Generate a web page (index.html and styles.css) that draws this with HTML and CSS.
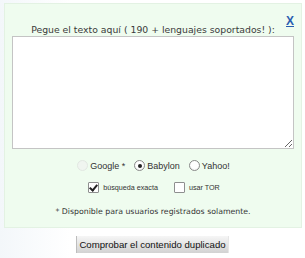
FILE: index.html
```html
<!DOCTYPE html>
<html>
<head>
<meta charset="utf-8">
<link rel="stylesheet" href="styles.css">
</head>
<body>
<div class="page">
  <div class="panel">
    <div class="close-row"><a class="close" href="#">X</a></div>
    <div class="title">Pegue el texto aquí ( 190 + lenguajes soportados! ):</div>
    <textarea class="text"></textarea>
    <div class="engines">
      <label class="opt disabled"><input type="radio" name="e" disabled> Google *</label>
      <label class="opt"><input type="radio" name="e" checked> Babylon</label>
      <label class="opt"><input type="radio" name="e"> Yahoo!</label>
    </div>
    <div class="checks">
      <label class="chk"><input type="checkbox" checked> búsqueda exacta</label>
      <label class="chk"><input type="checkbox"> usar TOR</label>
    </div>
    <div class="note">* Disponible para usuarios registrados solamente.</div>
  </div>
  <div class="actions">
    <button class="submit">Comprobar el contenido duplicado</button>
  </div>
</div>
</body>
</html>
```
FILE: styles.css
```css
html, body { margin: 0; padding: 0; background: #fff; }
body { font-family: "DejaVu Sans", Verdana, sans-serif; color: #333; }
.page {
  width: 305px; height: 258px;
  background: linear-gradient(90deg, #f3f7fa 0, #fff 70px);
  padding-top: 3px; box-sizing: border-box;
}
.panel {
  margin: 0 3px 0 4px;
  height: 225px;
  box-sizing: border-box;
  background: #effcef;
  border: 1px solid #e3f2e3;
  display: flex; flex-direction: column; align-items: center;
}
.close-row { align-self: stretch; display: flex; justify-content: flex-end; height: 20px; padding-right: 7px; padding-top: 11px; box-sizing: border-box; }
.close { color: #2a5db0; font: bold 12px "Liberation Sans", Arial, sans-serif; text-decoration: underline; line-height: 12px; }
.title { font-size: 9.3px; color: #3a3a3a; line-height: 12px; margin-top: 0; }
.text {
  width: 282px; height: 113px; box-sizing: border-box;
  margin: 0; border: 1px solid #c4c4c4; background: #fff; resize: vertical;
  padding: 2px;
}
.engines { display: flex; gap: 9px; margin-top: 11px; font: 9px "Liberation Sans", Arial, sans-serif; color: #333; margin-left: 1px; }
.opt { display: flex; align-items: center; }
.opt input {
  appearance: none; -webkit-appearance: none;
  margin: 0 2px 0 0; width: 11px; height: 11px; box-sizing: border-box;
  border: 1px solid #8a8a8a; border-radius: 50%;
  background: radial-gradient(circle at 50% 40%, #fff 0, #fff 50%, #e8e8e8 100%);
  display: grid; place-items: center;
}
.opt input:checked::after { content: ""; width: 4px; height: 4px; border-radius: 50%; background: #222; }
.opt.disabled input { border-color: #e2e8e2; background: #f0f5f0; }
.checks { display: flex; gap: 16px; margin-top: 11px; font: 7.2px "Liberation Sans", Arial, sans-serif; color: #333; margin-left: 2px; }
.chk { display: flex; align-items: center; }
.chk input {
  appearance: none; -webkit-appearance: none;
  margin: 0 4px 0 0; width: 11px; height: 11px; box-sizing: border-box;
  border: 1px solid #8e8f8f; background: #fff; border-radius: 1px;
  display: grid; place-items: center;
}
.chk input:checked::after {
  content: ""; width: 3px; height: 6px; margin-top: -2px;
  border: solid #222; border-width: 0 2px 2px 0; transform: rotate(40deg);
}
.note { font-size: 7.8px; color: #333; margin-top: 14px; }
.actions { display: flex; justify-content: center; padding-top: 8px; }
.submit {
  font: 9.6px "Liberation Sans", Arial, sans-serif; color: #111;
  background: linear-gradient(#f6f6f6, #d2d2d2);
  border: none; border-left: 1px solid #bdbdbd; border-right: 1px solid #e6e6e6;
  padding: 0 2px; height: 17px;
}
```
